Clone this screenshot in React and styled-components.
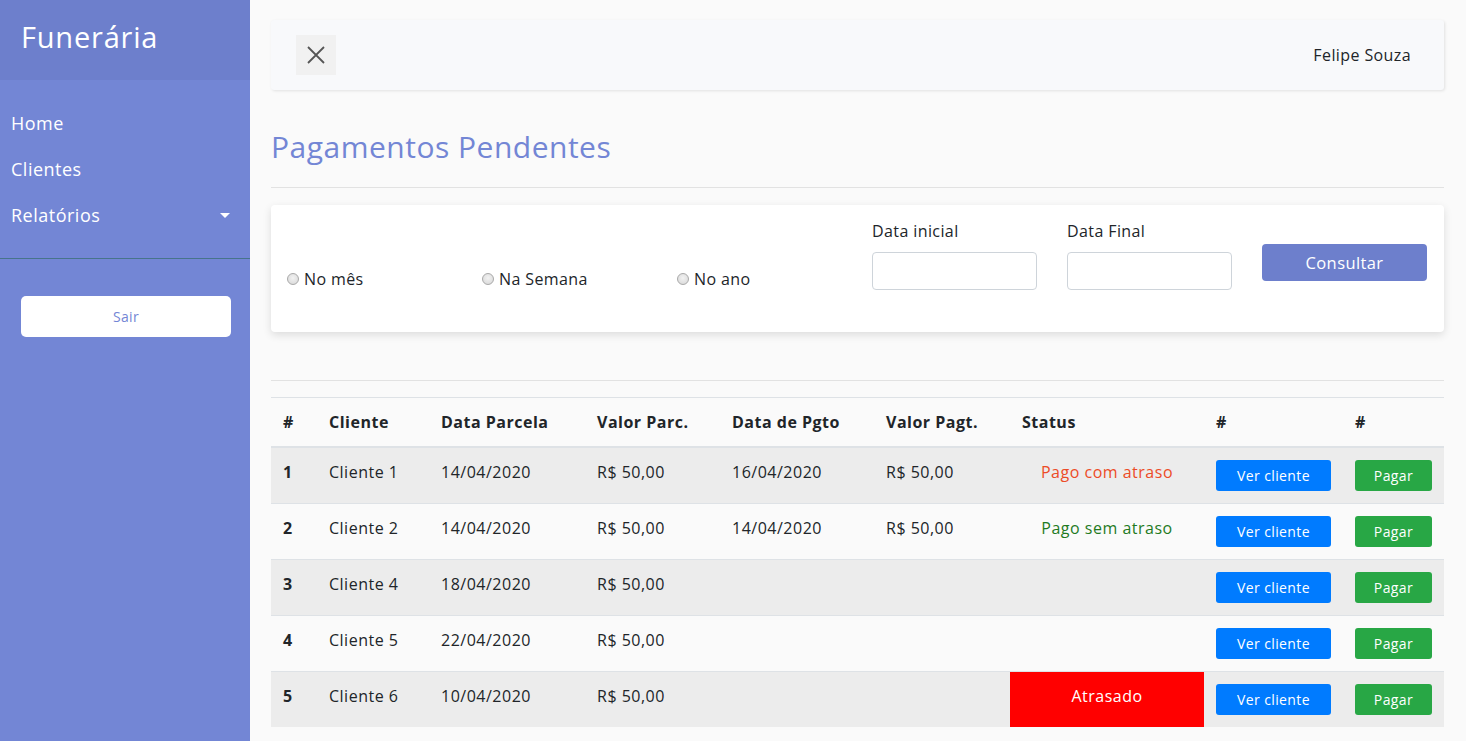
import React from "react";
import styled, { createGlobalStyle } from "styled-components";

const GlobalStyle = createGlobalStyle`
  body {
    margin: 0;
    font-family: "Open Sans", "Noto Sans", sans-serif;
    background: #fafafa;
    color: #212529;
  }
  * {
    box-sizing: border-box;
  }
`;

const Wrapper = styled.div`
  display: flex;
  align-items: stretch;
  min-height: 100vh;
`;

const Sidebar = styled.nav`
  width: 250px;
  flex-shrink: 0;
  background: #7386d5;
  color: #fff;
`;

const SidebarHeader = styled.div`
  height: 80px;
  background: #6d7fcc;
  display: flex;
  align-items: center;
  padding: 0 21px 8px;
`;

const Brand = styled.h3`
  margin: 0;
  font-size: 29px;
  font-weight: 500;
  letter-spacing: 0.8px;
`;

const Menu = styled.ul`
  list-style: none;
  margin: 0;
  padding: 20px 0;
  border-bottom: 1px solid #47748b;
`;

const MenuItem = styled.li`
  position: relative;
  padding: 10px 11px;
  font-size: 18px;
  line-height: 26px;
  letter-spacing: 0.5px;
  color: #fff;

  ${(p) =>
    p.$dropdown &&
    `
    &::after {
      content: "";
      position: absolute;
      right: 20px;
      top: 21px;
      border-top: 5px solid #fff;
      border-left: 5px solid transparent;
      border-right: 5px solid transparent;
    }
  `}
`;

const Ctas = styled.div`
  padding: 37px 19px 0 21px;
`;

const LogoutButton = styled.button`
  width: 210px;
  height: 41px;
  border: none;
  border-radius: 5px;
  background: #fff;
  color: #7386d5;
  font-family: inherit;
  font-size: 14px;
  letter-spacing: 0.3px;
`;

const Content = styled.main`
  flex: 1;
  padding: 20px 22px 0 21px;
  background: #fafafa;
`;

const Navbar = styled.header`
  height: 70px;
  display: flex;
  align-items: center;
  justify-content: space-between;
  padding: 0 33px 0 25px;
  background: #f8f9fb;
  border-radius: 3px;
  box-shadow: 1px 1px 3px rgba(0, 0, 0, 0.1);
`;

const CloseButton = styled.button`
  width: 40px;
  height: 40px;
  border: none;
  background: #f1f1f1;
  display: flex;
  align-items: center;
  justify-content: center;
  padding: 0;
`;

const UserName = styled.span`
  font-size: 16px;
  letter-spacing: 0.4px;
  color: #212529;
`;

const Title = styled.h2`
  margin: 40px 0 0;
  height: 34px;
  line-height: 34px;
  font-size: 30px;
  font-weight: 500;
  letter-spacing: 0.5px;
  color: #7386d5;
`;

const Divider = styled.hr`
  margin: ${(p) => p.$top}px 0 0;
  border: none;
  border-top: 1px solid #e2e2e2;
`;

const FilterCard = styled.section`
  margin-top: 17px;
  height: 127px;
  padding: 16px;
  background: #fff;
  border-radius: 4px;
  box-shadow: 0 3px 8px rgba(0, 0, 0, 0.12);
  display: grid;
  grid-template-columns: repeat(6, 165px);
  column-gap: 30px;
  align-items: start;
`;

const RadioLabel = styled.label`
  margin-top: 46px;
  display: flex;
  align-items: center;
  gap: 5px;
  font-size: 16px;
  line-height: 24px;
  letter-spacing: 0.4px;
  color: #212529;

  input {
    appearance: none;
    margin: 0;
    width: 12px;
    height: 12px;
    border-radius: 50%;
    border: 1px solid #a9a9a9;
    background: radial-gradient(circle at 50% 40%, #f2f2f2 0%, #d6d6d6 100%);
  }
`;

const Field = styled.div`
  display: flex;
  flex-direction: column;
`;

const FieldLabel = styled.label`
  font-size: 16px;
  line-height: 20px;
  letter-spacing: 0.4px;
  color: #212529;
  margin-bottom: 11px;
`;

const TextInput = styled.input`
  height: 38px;
  width: 100%;
  border: 1px solid #ced4da;
  border-radius: 4px;
  background: #fff;
`;

const SubmitButton = styled.button`
  margin-top: 23px;
  height: 37px;
  border: none;
  border-radius: 4px;
  background: #6d7fcc;
  color: #fff;
  font-family: inherit;
  font-size: 16.5px;
  font-weight: 500;
  letter-spacing: 0.4px;
`;

const Table = styled.table`
  margin-top: 16px;
  width: 100%;
  border-collapse: collapse;
  table-layout: fixed;
  font-size: 16px;
  letter-spacing: 0.5px;
`;

const Th = styled.th`
  text-align: left;
  padding: 12px;
  line-height: 24px;
  font-weight: 700;
  border-top: 1px solid #dee2e6;
  border-bottom: 2px solid #dee2e6;
  color: #212529;
`;

const Row = styled.tr`
  background: ${(p) => (p.$striped ? "#ececec" : "transparent")};
  border-top: 1px solid #dee2e6;
`;

const Td = styled.td`
  padding: 12px;
  line-height: 24px;
  vertical-align: top;
  font-weight: ${(p) => (p.$bold ? 700 : 400)};
  color: #212529;
`;

const statusColors = {
  late: "#ec4b27",
  ok: "#1f7a1f",
};

const StatusCell = styled.td`
  padding: 12px;
  line-height: 24px;
  vertical-align: top;
  text-align: center;
  color: ${(p) => (p.$kind === "overdue" ? "#fff" : statusColors[p.$kind])};
  background: ${(p) => (p.$kind === "overdue" ? "#ff0000" : "transparent")};
`;

const ActionButton = styled.button`
  display: block;
  height: 31px;
  padding: 0;
  width: ${(p) => p.$width}px;
  border: none;
  border-radius: 3px;
  background: ${(p) => p.$bg};
  color: #fff;
  font-family: inherit;
  font-size: 14px;
  letter-spacing: 0.4px;
`;

const columns = [
  { label: "#", width: 46 },
  { label: "Cliente", width: 112 },
  { label: "Data Parcela", width: 156 },
  { label: "Valor Parc.", width: 135 },
  { label: "Data de Pgto", width: 154 },
  { label: "Valor Pagt.", width: 136 },
  { label: "Status", width: 194 },
  { label: "#", width: 139 },
  { label: "#", width: 101 },
];

const payments = [
  { id: 1, client: "Cliente 1", due: "14/04/2020", value: "R$ 50,00", paidAt: "16/04/2020", paid: "R$ 50,00", status: "Pago com atraso", kind: "late" },
  { id: 2, client: "Cliente 2", due: "14/04/2020", value: "R$ 50,00", paidAt: "14/04/2020", paid: "R$ 50,00", status: "Pago sem atraso", kind: "ok" },
  { id: 3, client: "Cliente 4", due: "18/04/2020", value: "R$ 50,00", paidAt: "", paid: "", status: "", kind: "ok" },
  { id: 4, client: "Cliente 5", due: "22/04/2020", value: "R$ 50,00", paidAt: "", paid: "", status: "", kind: "ok" },
  { id: 5, client: "Cliente 6", due: "10/04/2020", value: "R$ 50,00", paidAt: "", paid: "", status: "Atrasado", kind: "overdue" },
];

const CloseIcon = () => (
  <svg width="20" height="20" viewBox="0 0 20 20">
    <path d="M2 2 L18 18 M18 2 L2 18" stroke="#555" strokeWidth="1.8" fill="none" />
  </svg>
);

const App = () => {
  return (
    <Wrapper>
      <GlobalStyle />
      <Sidebar>
        <SidebarHeader>
          <Brand>Funerária</Brand>
        </SidebarHeader>
        <Menu>
          <MenuItem>Home</MenuItem>
          <MenuItem>Clientes</MenuItem>
          <MenuItem $dropdown>Relatórios</MenuItem>
        </Menu>
        <Ctas>
          <LogoutButton>Sair</LogoutButton>
        </Ctas>
      </Sidebar>

      <Content>
        <Navbar>
          <CloseButton>
            <CloseIcon />
          </CloseButton>
          <UserName>Felipe Souza</UserName>
        </Navbar>

        <Title>Pagamentos Pendentes</Title>
        <Divider $top={23} />

        <FilterCard>
          <RadioLabel>
            <input type="radio" name="periodo" /> No mês
          </RadioLabel>
          <RadioLabel>
            <input type="radio" name="periodo" /> Na Semana
          </RadioLabel>
          <RadioLabel>
            <input type="radio" name="periodo" /> No ano
          </RadioLabel>
          <Field>
            <FieldLabel>Data inicial</FieldLabel>
            <TextInput type="text" />
          </Field>
          <Field>
            <FieldLabel>Data Final</FieldLabel>
            <TextInput type="text" />
          </Field>
          <SubmitButton>Consultar</SubmitButton>
        </FilterCard>

        <Divider $top={48} />

        <Table>
          <colgroup>
            {columns.map((c, i) => (
              <col key={i} style={{ width: c.width }} />
            ))}
          </colgroup>
          <thead>
            <tr>
              {columns.map((c, i) => (
                <Th key={i}>{c.label}</Th>
              ))}
            </tr>
          </thead>
          <tbody>
            {payments.map((p, i) => (
              <Row key={p.id} $striped={i % 2 === 0}>
                <Td $bold>{p.id}</Td>
                <Td>{p.client}</Td>
                <Td>{p.due}</Td>
                <Td>{p.value}</Td>
                <Td>{p.paidAt}</Td>
                <Td>{p.paid}</Td>
                <StatusCell $kind={p.kind}>{p.status}</StatusCell>
                <Td>
                  <ActionButton $width={115} $bg="#007bff">
                    Ver cliente
                  </ActionButton>
                </Td>
                <Td>
                  <ActionButton $width={77} $bg="#28a745">
                    Pagar
                  </ActionButton>
                </Td>
              </Row>
            ))}
          </tbody>
        </Table>
      </Content>
    </Wrapper>
  );
};

export default App;
